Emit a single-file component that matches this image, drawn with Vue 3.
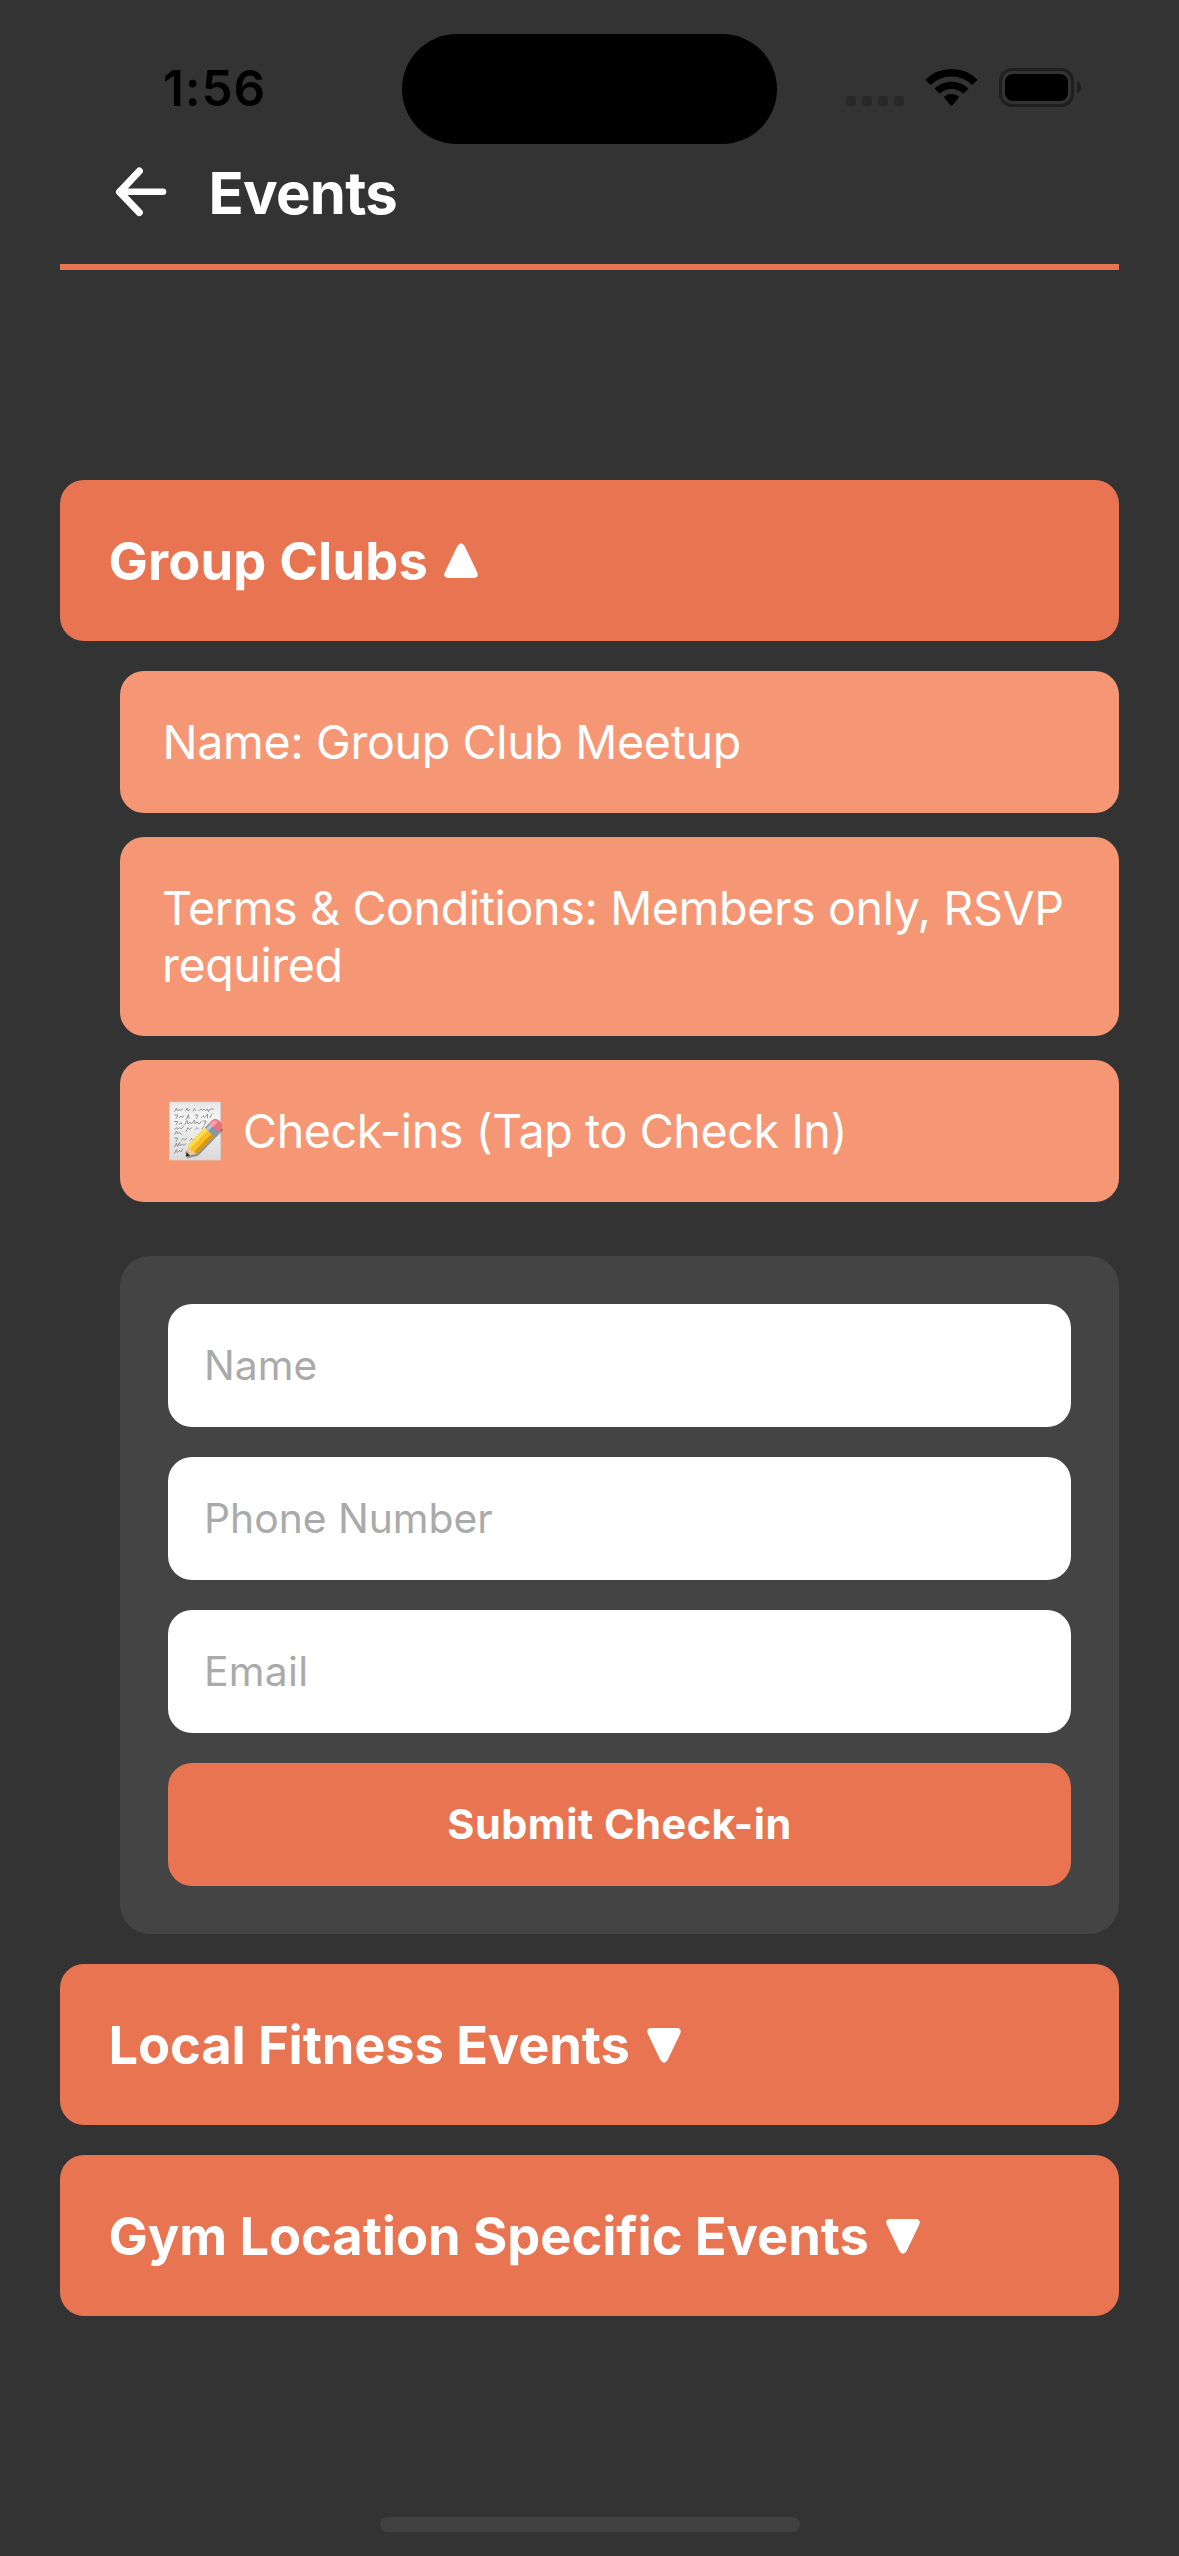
<script setup>
import { ref } from 'vue'

const sections = [
  { id: 'clubs', title: 'Group Clubs', open: true },
  { id: 'local', title: 'Local Fitness Events', open: false },
  { id: 'gym', title: 'Gym Location Specific Events', open: false },
]

const fields = [
  { id: 'name', label: 'Name' },
  { id: 'phone', label: 'Phone Number' },
  { id: 'email', label: 'Email' },
]

const form = ref({ name: '', phone: '', email: '' })
</script>

<template>
  <div class="screen">
    <div class="status-bar">
      <span class="time">1:56</span>
      <div class="status-icons">
        <div class="signal"><i v-for="n in 4" :key="n"></i></div>
        <svg class="wifi" width="53" height="39" viewBox="0 0 53 39" fill="none" stroke="#000">
          <path d="M3 14.4A33.4 33.4 0 0 1 50 14.4" stroke-width="7.4" />
          <path d="M12.1 23.2A20.6 20.6 0 0 1 40.9 23.2" stroke-width="7.4" />
          <path d="M19.2 29.6Q18.6 29 19.3 28.4Q22.5 26 26.5 26T33.7 28.4Q34.4 29 33.8 29.6L27.3 37.4Q26.5 38.3 25.7 37.4Z" fill="#000" stroke="none" />
        </svg>
        <svg class="battery" width="83" height="39" viewBox="0 0 83 39">
          <rect x="1.5" y="1.5" width="72" height="36" rx="11.5" fill="none" stroke="#1f1f1f" stroke-width="3" />
          <rect x="6" y="6" width="63" height="27" rx="8" fill="#000" />
          <path d="M78 13.2C80.6 14.4 82 16.8 82 19.3S80.6 24.3 78 25.4Z" fill="#1f1f1f" />
        </svg>
      </div>
      <div class="island"></div>
    </div>

    <header class="header">
      <svg class="back" width="56" height="56" viewBox="0 0 56 56" fill="none" stroke="#fff" stroke-linecap="round" stroke-linejoin="round">
        <path d="M26.3 7.1L6.6 28L26.3 48.4" stroke-width="7.2" />
        <path d="M7 27.8H50" stroke-width="6.6" />
      </svg>
      <h1 class="title">Events</h1>
    </header>

    <main class="sections">
      <section v-for="s in sections" :key="s.id" class="section">
        <button class="section-head" :class="s.id" type="button">
          <span>{{ s.title }}</span>
          <svg class="caret" :class="{ up: s.open }" width="34" height="36" viewBox="0 0 34 36">
            <path d="M3.8 1H30.2Q35 1.6 33.3 6.4L20.6 33Q17 38.4 13.4 33L.7 6.4Q-1 1.6 3.8 1Z" fill="#fff" />
          </svg>
        </button>

        <div v-if="s.open" class="details">
          <div class="item name">Name: Group Club Meetup</div>
          <div class="item terms">Terms &amp; Conditions: Members only, RSVP required</div>
          <div class="item checkins">
            <svg class="memo" width="57" height="60" viewBox="0 0 57 60">
              <defs>
                <linearGradient id="paper" x1="0" y1="0" x2="0" y2="1">
                  <stop offset="0" stop-color="#e6e6e6" />
                  <stop offset=".25" stop-color="#f5f5f5" />
                  <stop offset="1" stop-color="#dadada" />
                </linearGradient>
              </defs>
              <rect x="1.5" y="1" width="51" height="58" fill="url(#paper)" stroke="#d2d2d2" stroke-width=".7" />
              <g fill="none" stroke="#8a8a8a" stroke-width=".9" stroke-linecap="round">
                <path d="M6.5 10.5l2-3.5 1 3 2-2 1 1.5 2-1.5M17.5 10l2-3 .5 3 2-1.5M25 10l1.5-2.5 1 2M31 9.500l2-1.500 1 1.500 2-1.500 1.500 1.500 2-1.500 1 2.500 2-2.500h3" />
                <path d="M6.5 14h3.500l-2 3.500M11 17l2-2 1 1.500 2-1.500M18 18.500l2.500-5 .5 4M27 14h3l-1.500 3.500M33 17l2-2 1.500 1.500 3-3.500v4M42 16.500l2-3.500" />
                <path d="M6.5 20.5h3.500l-2 3.500M11 23.500l2-2 1 1.500M17 23.500l2-4 1 3.500 2-2 1.500 2 3-4 .5 4 2-2 2 2 2-2M35 20h3l-1.500 3.500" />
                <path d="M6.5 28.5l2-2 1 2 2-2 1.500 1.500 2.500-2.500M18 30.500l2-4 1.500 2 2-1.500M27 28.500l2-2 1.500 1.500M34 28l2-3" />
                <path d="M6.5 33.5l2-3.500 1 3 1.500-1.500 2 1.500" />
                <path d="M6.5 37h3.500l-2 3.500M13 39.500l2-2 1.500 1.500 2-1.500M22 39.500l1.500-2 1.500 2" />
                <path d="M6.5 46l2-4 1 3.500 2-4 1 3.500 2-2 1.500 1.500 2-2" />
                <path d="M6.5 52.5l2-4 1 3 2-2 1.500 1.500 1.500-3M17.500 52l1.500-2.500" />
              </g>
              <g transform="translate(18.5 57.5) rotate(-46)" opacity=".45">
                <path d="M0 0L10-4.500H46V6.500H10Z" fill="#333" />
              </g>
              <g transform="translate(17.5 55.8) rotate(-46)">
                <path d="M0 0L10.500-6.200V6.200Z" fill="#edc98a" />
                <path d="M0 0L4.200-2.500V2.500Z" fill="#292f36" />
                <path d="M10.500-6.200H35V6.200H10.500Q8.500 4 10 2.100 8.200 0 10-2.100 8.500-4 10.500-6.200Z" fill="#f6c024" />
                <path d="M10.300-6.200H35V-2.400H10Q8.500-4 10.300-6.200Z" fill="#ffda55" />
                <path d="M10 2.600H35V6.200H10.500Q9 4.400 10 2.600Z" fill="#d99710" />
                <path d="M34.500-6.300H40.500V6.300H34.500Z" fill="#8796a8" />
                <path d="M34.500-5H40.500V-1.500H34.500Z" fill="#b6c2cf" />
                <path d="M40.500-6.300H45Q49.500-5 49.500 0T45 6.300H40.500Z" fill="#e8717f" />
                <path d="M40.500-5.200H44.500Q47.500-4 48-1H40.500Z" fill="#f5a5ad" />
              </g>
            </svg>
            <span>Check-ins (Tap to Check In)</span>
          </div>

          <form class="form" @submit.prevent>
            <input v-for="f in fields" :key="f.id" v-model="form[f.id]" class="field" :class="f.id" :placeholder="f.label" />
            <button class="submit" type="submit">Submit Check-in</button>
          </form>
        </div>
      </section>
    </main>

    <div class="home-indicator"></div>
  </div>
</template>

<style>
body {
  margin: 0;
  background: #333;
}
</style>

<style scoped>
.screen {
  box-sizing: border-box;
  position: relative;
  display: flex;
  flex-direction: column;
  width: 1179px;
  height: 2556px;
  padding: 0 60px;
  background: #333;
  color: #fff;
  font-family: Inter, "Liberation Sans", sans-serif;
  overflow: hidden;
}

button,
input {
  box-sizing: border-box;
  margin: 0;
  border: 0;
  outline: 0;
  font-family: inherit;
}

.status-bar {
  display: flex;
  flex: none;
  justify-content: space-between;
  height: 144px;
  padding: 0 37px 0 103px;
  color: #000;
}

.time {
  margin-top: 58px;
  height: 60px;
  font-size: 49.5px;
  line-height: 60px;
  font-weight: 600;
  letter-spacing: 0.9px;
}

.status-icons {
  display: flex;
  align-items: flex-start;
  margin-top: 68px;
}

.signal {
  display: flex;
  gap: 6px;
  margin-top: 28px;
}

.signal i {
  width: 10px;
  height: 10px;
  border-radius: 3px;
  background: #292929;
}

.wifi {
  margin-left: 21px;
}

.battery {
  margin-left: 21px;
}

.island {
  position: absolute;
  top: 33.5px;
  left: 401.7px;
  width: 375.6px;
  height: 110.5px;
  border-radius: 56px;
  background: #000;
}

.header {
  display: flex;
  flex: none;
  align-items: flex-start;
  border-bottom: 6px solid #e97451;
  padding: 0 0 22px 53px;
}

.back {
  margin-top: 20px;
}

.title {
  margin: 0 0 0 39.5px;
  font-size: 58px;
  line-height: 98px;
  font-weight: 700;
  letter-spacing: -0.72px;
}

.sections {
  display: flex;
  flex-direction: column;
  gap: 30px;
  margin-top: 210px;
}

.section-head {
  display: flex;
  align-items: center;
  width: 100%;
  height: 161px;
  padding: 0 48.5px;
  border-radius: 24px;
  background: #e97451;
  color: #fff;
  font-size: 52.4px;
  font-weight: 700;
  white-space: nowrap;
}

.clubs {
  letter-spacing: 0.185px;
}

.local {
  letter-spacing: -0.109px;
}

.gym {
  letter-spacing: -0.049px;
}

.caret {
  margin-left: 17px;
}

.caret.up {
  margin-left: 15.5px;
  transform: rotate(180deg);
}

.details {
  display: flex;
  flex-direction: column;
  gap: 24px;
  margin: 30px 0 0 60px;
}

.item {
  display: flex;
  align-items: center;
  padding: 42.5px 42px;
  border-radius: 24px;
  background: #f59774;
  font-size: 46.6px;
  line-height: 57px;
  letter-spacing: -0.41px;
}

.item.name {
  padding-left: 42.5px;
  letter-spacing: -0.36px;
}

.item.terms {
  padding-right: 30px;
  letter-spacing: -0.39px;
}

.memo {
  flex: none;
  margin: -2px 18px -1px 6px;
}

.form {
  display: flex;
  flex-direction: column;
  gap: 30px;
  margin-top: 30px;
  padding: 48px;
  border-radius: 30px;
  background: #444;
}

.field {
  width: 100%;
  height: 123px;
  padding: 0 36px 2px;
  border-radius: 24px;
  background: #fff;
  color: #333;
  font-size: 40.8px;
}

.field.email {
  letter-spacing: 0.3px;
}

.field::placeholder {
  color: #aaa;
  opacity: 1;
}

.submit {
  height: 123px;
  padding: 0 0 2px;
  border-radius: 24px;
  background: #e97451;
  color: #fff;
  font-size: 41.4px;
  font-weight: 700;
  letter-spacing: 0.55px;
}

.home-indicator {
  flex: none;
  width: 420px;
  height: 15px;
  margin: auto auto 24px;
  border-radius: 8px;
  background: #404040;
}
</style>
